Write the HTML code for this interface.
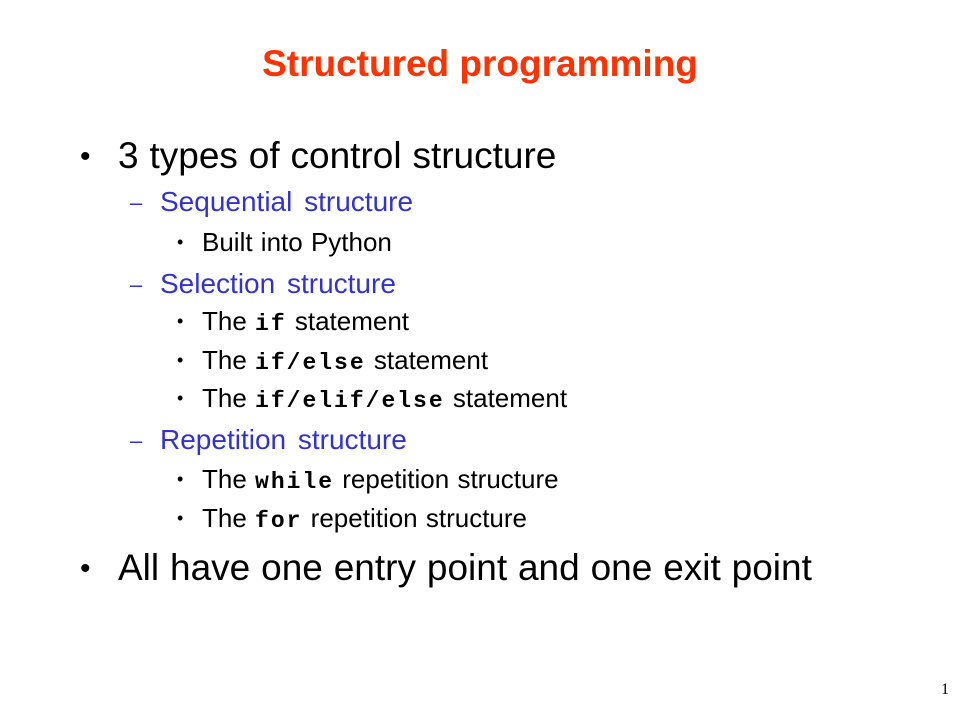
<!DOCTYPE html>
<html><head><style>
body{margin:0;width:960px;height:720px;background:#fff;position:relative;font-family:"Liberation Sans",sans-serif;overflow:hidden}
.t{position:absolute;white-space:nowrap;line-height:1}
.c{font-family:"Liberation Mono",monospace;font-weight:bold;font-size:23px;letter-spacing:2px}
.l1{font-size:37px;color:#000;left:118px;word-spacing:0.6px}
.l2{font-size:28px;color:#3333cc;left:160px;word-spacing:4px}
.l3{font-size:26px;color:#000;left:202px;word-spacing:1px}
.b1{font-size:30px;left:80px}
.d{font-size:22px;color:#3333cc;left:130px}
.b3{font-size:18px;left:177px}
</style></head><body>
<div class="t" style="left:0;width:960px;text-align:center;top:45px;font-size:37px;font-weight:bold;color:#ff3300">Structured programming</div>

<div class="t b1" style="top:142px">•</div>
<div class="t l1" style="top:137px">3 types of control structure</div>

<div class="t d" style="top:192px">–</div>
<div class="t l2" style="top:188px">Sequential structure</div>
<div class="t b3" style="top:233px">•</div>
<div class="t l3" style="top:229px">Built into Python</div>

<div class="t d" style="top:274px">–</div>
<div class="t l2" style="top:270px">Selection structure</div>
<div class="t b3" style="top:312px">•</div>
<div class="t l3" style="top:308px">The <span class="c">if</span> statement</div>
<div class="t b3" style="top:351px">•</div>
<div class="t l3" style="top:347px">The <span class="c">if/else</span> statement</div>
<div class="t b3" style="top:389px">•</div>
<div class="t l3" style="top:385px">The <span class="c">if/elif/else</span> statement</div>

<div class="t d" style="top:430px">–</div>
<div class="t l2" style="top:426px">Repetition structure</div>
<div class="t b3" style="top:470px">•</div>
<div class="t l3" style="top:466px">The <span class="c">while</span> repetition structure</div>
<div class="t b3" style="top:509px">•</div>
<div class="t l3" style="top:505px">The <span class="c">for</span> repetition structure</div>

<div class="t b1" style="top:554px">•</div>
<div class="t l1" style="top:549px">All have one entry point and one exit point</div>

<div class="t" style="left:941px;top:682px;font-size:16px;font-family:'Liberation Serif',serif">1</div>
</body></html>
